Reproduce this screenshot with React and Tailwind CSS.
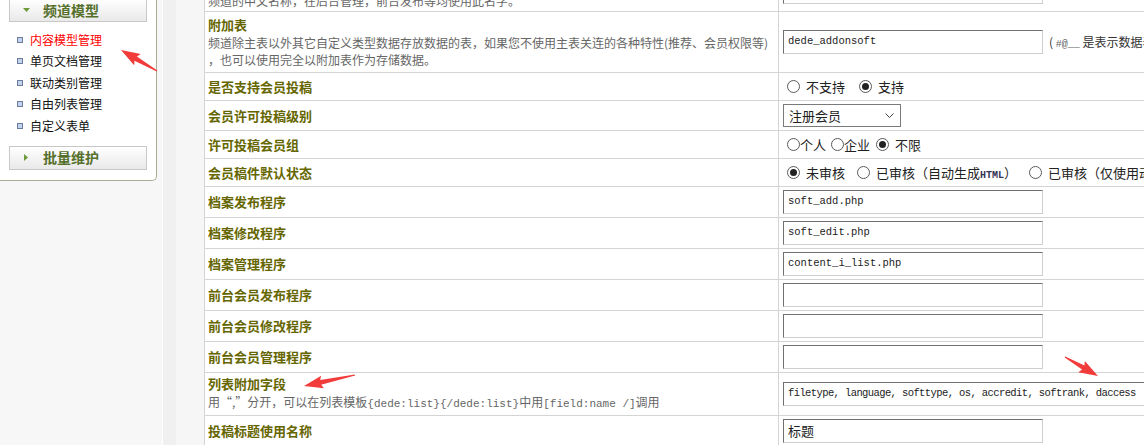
import React from 'react';

const cjk = { fontFamily: '"Noto Sans CJK SC", "Noto Sans", sans-serif' };
const mono = { fontFamily: '"Liberation Mono", "Noto Sans CJK SC", monospace' };

function Arrow({ x1, y1, x2, y2 }) {
    const len = Math.hypot(x2 - x1, y2 - y1);
    const ang = (Math.atan2(y2 - y1, x2 - x1) * 180) / Math.PI;
    const hb = len - 17;
    return (
        <g transform={`translate(${x1} ${y1}) rotate(${ang})`}>
            <polygon
                points={`0,-0.6 ${hb},-2.4 ${hb - 2},-6.5 ${len},0 ${hb - 2},6.5 ${hb},2.4 0,0.6`}
                fill="#f23b3b"
            />
        </g>
    );
}

function Radio({ checked }) {
    return (
        <span className="inline-flex w-[13px] h-[13px] rounded-full border border-[#5a5a5a] bg-white items-center justify-center shrink-0">
            {checked && <span className="w-[7px] h-[7px] rounded-full bg-[#222]" />}
        </span>
    );
}

function Field({ value, wide, cjkText }) {
    return (
        <div
            className={`${wide ? 'w-[380px] tracking-[-0.6px]' : 'w-[260px]'} h-[24px] border border-t-[#707070] border-l-[#707070] border-b-[#cfcfcf] border-r-[#cfcfcf] bg-white flex items-center pl-[4px] text-[#222] ${cjkText ? 'text-[13px]' : 'text-[10.5px]'} whitespace-nowrap overflow-hidden`}
            style={cjkText ? cjk : mono}
        >
            {value}
        </div>
    );
}

function Row({ h, label, desc, children }) {
    return (
        <div className={`flex border-b border-[#d4d4d4] ${h}`}>
            <div className="w-[574px] shrink-0 border-r border-[#d4d4d4] flex flex-col justify-center pl-[3px]">
                {label && <div className="text-[13px] font-bold text-[#666600] leading-[18px]">{label}</div>}
                {desc && <div className="text-[12px] text-[#666] leading-[17px]">{desc}</div>}
            </div>
            <div className="flex-1 flex items-center pl-[4px] text-[13px] text-[#222] whitespace-nowrap overflow-hidden">
                {children}
            </div>
        </div>
    );
}

const menu = ['内容模型管理', '单页文档管理', '联动类别管理', '自由列表管理', '自定义表单'];

function SideHead({ title, open }) {
    return (
        <div className="mx-[9px] h-[24px] border border-[#c8c8c8] bg-gradient-to-b from-white to-[#e9e9e9] flex items-center">
            <span className="w-[33px] flex justify-center">
                {open ? (
                    <svg width="7" height="5" viewBox="0 0 7 5"><polygon points="0,0 7,0 3.5,4" fill="#6c9a3a" /></svg>
                ) : (
                    <svg width="5" height="7" viewBox="0 0 5 7"><polygon points="0,0 4,3.5 0,7" fill="#6c9a3a" /></svg>
                )}
            </span>
            <span className="text-[14px] font-bold text-[#55702b]">{title}</span>
        </div>
    );
}

export default function App() {
    return (
        <div className="relative h-[445px] w-[1144px] overflow-hidden bg-white flex" style={cjk}>
            {/* left menu */}
            <div className="w-[162px] shrink-0 bg-[#f7f7f7]">
                <div className="w-[157px] h-[183px] bg-white border-r border-b border-[#a9ac93] rounded-br-[5px] -mt-[2px]">
                    <SideHead title="频道模型" open />
                    <ul className="pt-[7px] pb-[9px]">
                        {menu.map((m, i) => (
                            <li key={m} className="h-[21.5px] flex items-center pl-[17px]">
                                <span className="w-[6px] h-[6px] border border-[#6b7b9a] bg-[#c4d4ee] mr-[7px]" />
                                <span className={`text-[12px] ${i === 0 ? 'text-[#ff0000]' : 'text-[#111]'}`}>{m}</span>
                            </li>
                        ))}
                    </ul>
                    <SideHead title="批量维护" />
                </div>
            </div>
            <div className="w-[1px] shrink-0 bg-white" />
            <div className="w-[13px] shrink-0 bg-[#f0f0f0]" />
            <div className="w-[28px] shrink-0 bg-[#f6f6f6]" />

            {/* form table */}
            <div className="flex-1 border-l border-[#d4d4d4] overflow-hidden">
                <div className="w-[1100px] -mt-[28px]">
                    <Row h="h-[40px]" label="频道名称" desc="频道的中文名称，在后台管理，前台发布等均使用此名字。">
                        <Field value="" />
                    </Row>
                    <Row h="h-[61px]" label="附加表" desc={<>频道除主表以外其它自定义类型数据存放数据的表，如果您不使用主表关连的各种特性(推荐、会员权限等)<br />，也可以使用完全以附加表作为存储数据。</>}>
                        <Field value="dede_addonsoft" />
                        <span className="ml-[6px] text-[12px] text-[#333]">( <span className="text-[10px] text-[#666]" style={mono}>#@__</span> 是表示数据表前缀）</span>
                    </Row>
                    <Row h="h-[28px]" label="是否支持会员投稿">
                        <span className="pl-[4px] flex items-center gap-[6px]">
                            <Radio /> <span className="mr-[8px]">不支持</span>
                            <Radio checked /> <span>支持</span>
                        </span>
                    </Row>
                    <Row h="h-[30px]" label="会员许可投稿级别">
                        <div className="w-[118px] h-[23px] border border-[#7a7a7a] flex items-center justify-between pl-[5px] pr-[6px] text-[13px]">
                            <span>注册会员</span>
                            <svg width="9" height="6" viewBox="0 0 9 6"><polyline points="0.5,0.5 4.5,4.5 8.5,0.5" fill="none" stroke="#444" strokeWidth="1" /></svg>
                        </div>
                    </Row>
                    <Row h="h-[28px]" label="许可投稿会员组">
                        <span className="pl-[4px] flex items-center">
                            <Radio /> <span className="mr-[5px]">个人</span>
                            <Radio /> <span className="mr-[6px]">企业</span>
                            <Radio checked /> <span className="ml-[6px]">不限</span>
                        </span>
                    </Row>
                    <Row h="h-[28px]" label="会员稿件默认状态">
                        <span className="pl-[4px] flex items-center gap-[6px]">
                            <Radio checked /> <span className="mr-[6px]">未审核</span>
                            <Radio /> <span className="mr-[6px]">已审核（自动生成<span className="text-[10px] font-bold text-[#335]" style={mono}>HTML</span>）</span>
                            <Radio /> <span>已审核（仅使用动态文档）</span>
                        </span>
                    </Row>
                    <Row h="h-[31px]" label="档案发布程序"><Field value="soft_add.php" /></Row>
                    <Row h="h-[31px]" label="档案修改程序"><Field value="soft_edit.php" /></Row>
                    <Row h="h-[31px]" label="档案管理程序"><Field value="content_i_list.php" /></Row>
                    <Row h="h-[31px]" label="前台会员发布程序"><Field value="" /></Row>
                    <Row h="h-[31px]" label="前台会员修改程序"><Field value="" /></Row>
                    <Row h="h-[31px]" label="前台会员管理程序"><Field value="" /></Row>
                    <Row h="h-[43px]" label="列表附加字段" desc={<>用“,”分开，可以在列表模板<span style={mono} className="text-[11px]">{'{dede:list}{/dede:list}'}</span>中用<span style={mono} className="text-[11px]">[field:name /]</span>调用</>}>
                        <Field wide value="filetype, language, softtype, os, accredit, softrank, daccess" />
                    </Row>
                    <Row h="h-[31px]" label="投稿标题使用名称"><Field value="标题" cjkText /></Row>
                </div>
            </div>

            <svg className="absolute inset-0 pointer-events-none" width="1144" height="445">
                <Arrow x1={157} y1={71} x2={121} y2={50} />
                <Arrow x1={355} y1={375} x2={304} y2={386} />
                <Arrow x1={1065} y1={357} x2={1098} y2={376} />
            </svg>
        </div>
    );
}
